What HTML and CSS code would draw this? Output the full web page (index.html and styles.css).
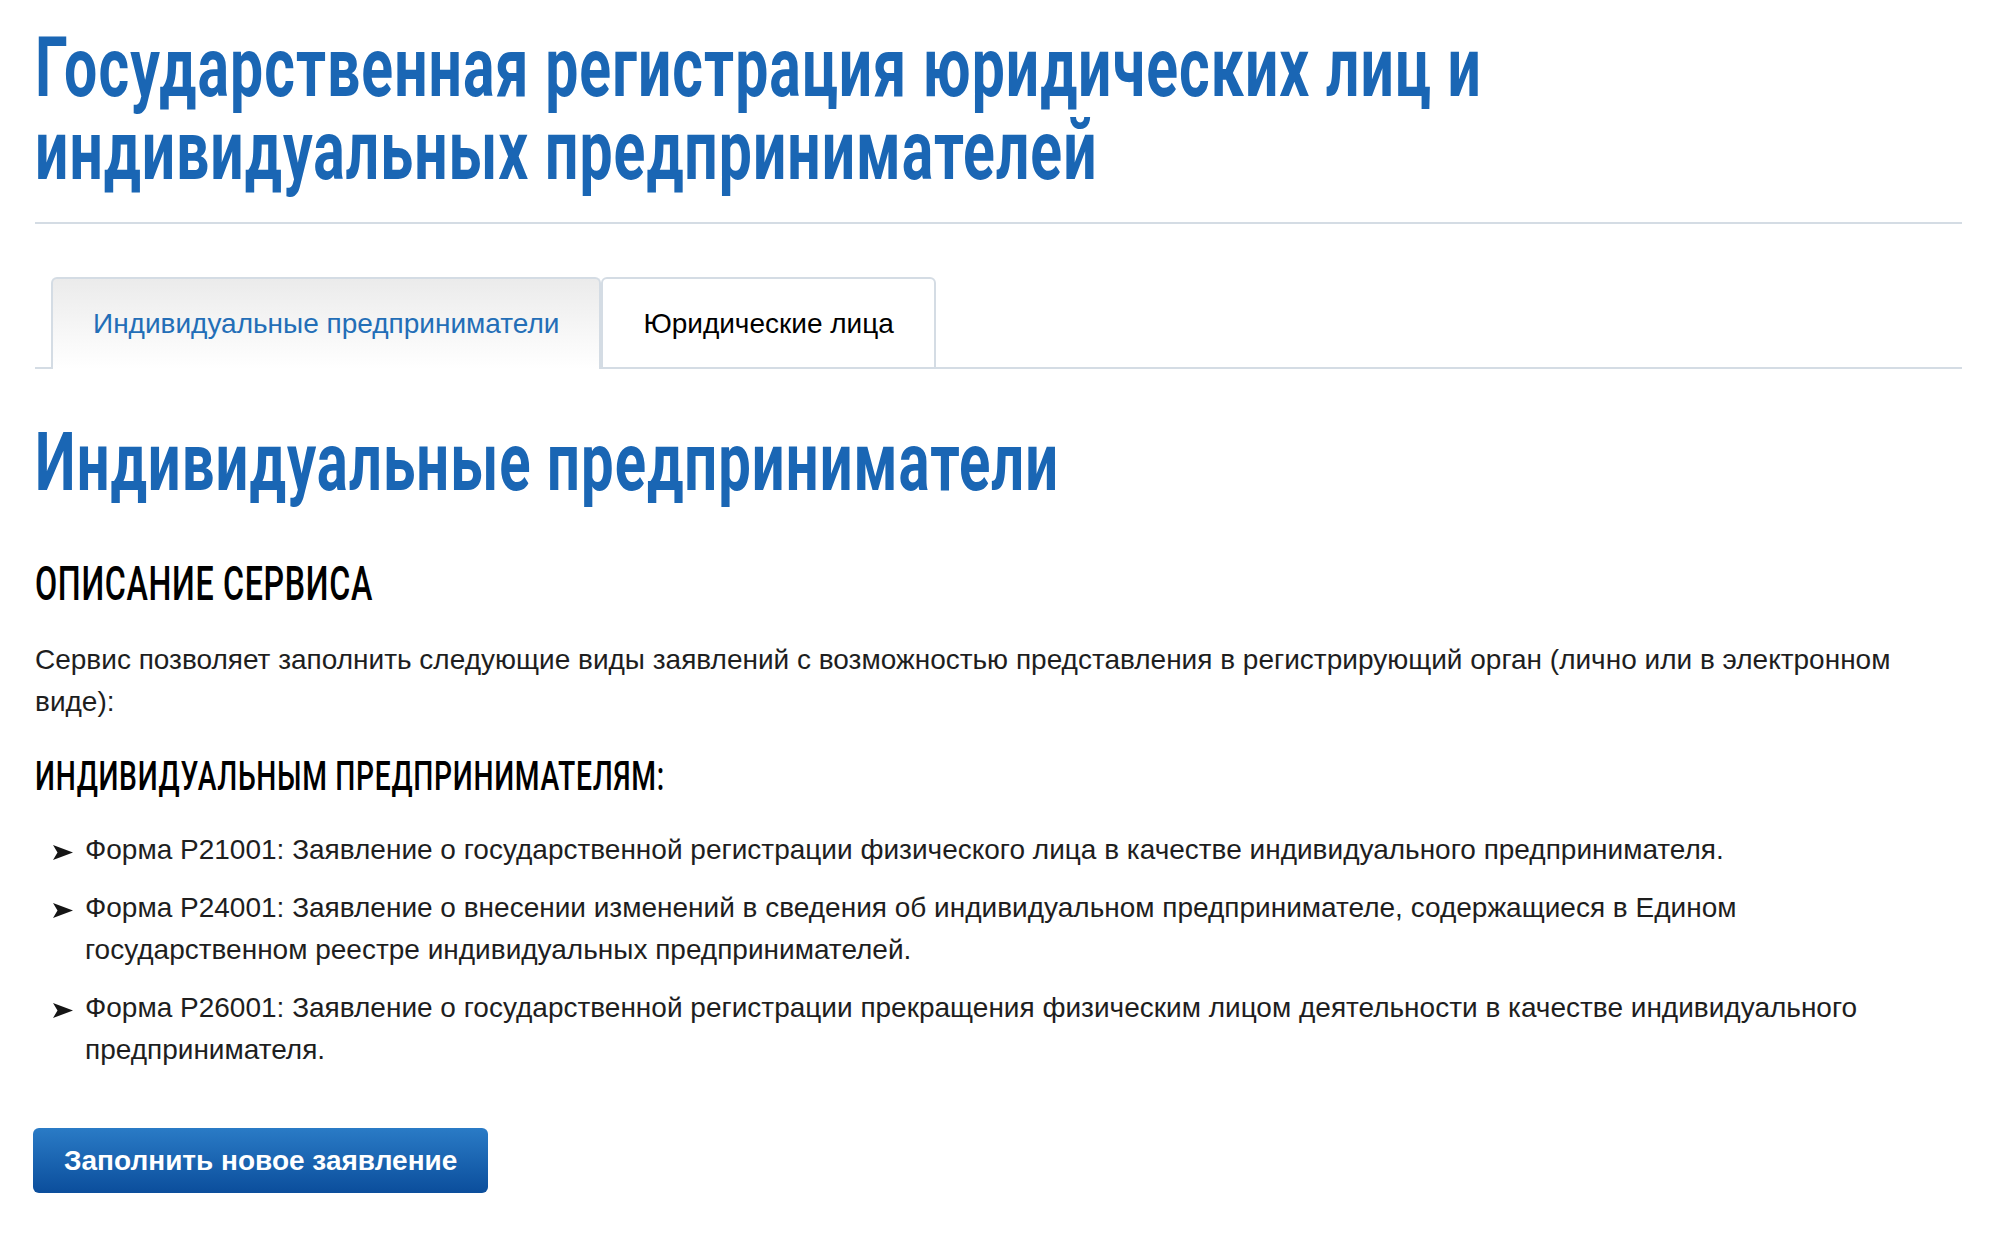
FILE: index.html
```html
<!DOCTYPE html>
<html lang="ru">
<head>
<meta charset="utf-8">
<title>Государственная регистрация юридических лиц и индивидуальных предпринимателей</title>
<link rel="stylesheet" href="styles.css">
</head>
<body>
<div class="page">
  <header class="page-head">
    <h1 class="page-title">Государственная регистрация юридических лиц и<br>индивидуальных предпринимателей</h1>
  </header>
  <nav class="tabs">
    <a class="tab tab-active" href="#">Индивидуальные предприниматели</a>
    <a class="tab" href="#">Юридические лица</a>
  </nav>
  <section class="content">
    <h2 class="section-title">Индивидуальные предприниматели</h2>
    <h3 class="sub-title">Описание сервиса</h3>
    <p class="text">Сервис позволяет заполнить следующие виды заявлений с возможностью представления в регистрирующий орган (лично или в электронном виде):</p>
    <h3 class="sub-title sub-title-sm">Индивидуальным предпринимателям:</h3>
    <ul class="forms">
      <li class="form-item">
        <svg class="arrow" viewBox="0 0 20 15"><polygon points="0,0 20,7.5 0,15 4.5,7.5"/></svg>
        <span>Форма Р21001: Заявление о государственной регистрации физического лица в качестве индивидуального предпринимателя.</span>
      </li>
      <li class="form-item">
        <svg class="arrow" viewBox="0 0 20 15"><polygon points="0,0 20,7.5 0,15 4.5,7.5"/></svg>
        <span>Форма Р24001: Заявление о внесении изменений в сведения об индивидуальном предпринимателе, содержащиеся в Едином государственном реестре индивидуальных предпринимателей.</span>
      </li>
      <li class="form-item">
        <svg class="arrow" viewBox="0 0 20 15"><polygon points="0,0 20,7.5 0,15 4.5,7.5"/></svg>
        <span>Форма Р26001: Заявление о государственной регистрации прекращения физическим лицом деятельности в качестве индивидуального предпринимателя.</span>
      </li>
    </ul>
    <div class="actions">
      <a class="btn" href="#">Заполнить новое заявление</a>
    </div>
  </section>
</div>
</body>
</html>
```

FILE: styles.css
```css
html, body {
  margin: 0;
  padding: 0;
  background: #ffffff;
  overflow-x: hidden;
}

body {
  font-family: "Liberation Sans", Arial, sans-serif;
  color: #1e1e1e;
}

.page {
  padding: 26px 38px 40px 35px;
}

.page-head {
  border-bottom: 2px solid #d4dce4;
  padding-bottom: 30px;
}

/* Condensed display headings */
.page-title,
.section-title,
.sub-title {
  margin: 0;
  font-family: Roboto, "Noto Sans", sans-serif;
  white-space: nowrap;
  transform-origin: 0 0;
}

.page-title {
  font-size: 84px;
  line-height: 83px;
  font-weight: 700;
  letter-spacing: 1.5px;
  color: #1a66b4;
  transform: scaleX(0.701);
}

/* Tabs */
.tabs {
  display: flex;
  margin-top: 53px;
  padding-left: 16px;
  border-bottom: 2px solid #d4dce4;
}

.tab {
  display: block;
  margin-bottom: -2px;
  padding: 25px 40px 23px;
  border: 2px solid #d4dce4;
  border-radius: 6px 6px 0 0;
  background: #ffffff;
  font-size: 28px;
  line-height: 40px;
  color: #000000;
  text-decoration: none;
}

.tab-active {
  border-bottom: 0;
  padding-bottom: 25px;
  background: linear-gradient(#ebebeb, #ffffff);
  color: #236eb7;
}

/* Content */
.section-title {
  margin-top: 48px;
  font-size: 82px;
  line-height: 90px;
  font-weight: 700;
  letter-spacing: 1.5px;
  color: #1a66b4;
  transform: scaleX(0.707);
}

.sub-title {
  margin-top: 49px;
  font-size: 48px;
  line-height: 56px;
  font-weight: 500;
  letter-spacing: 1px;
  color: #000000;
  text-transform: uppercase;
  transform: scaleX(0.671);
}

.sub-title-sm {
  margin-top: 29px;
  font-size: 41px;
  line-height: 48px;
  transform: scaleX(0.689);
}

.text {
  margin: 27px 0 0;
  font-size: 28px;
  line-height: 42px;
}

.forms {
  list-style: none;
  margin: 29px 0 0;
  padding: 0 0 0 18px;
  font-size: 28px;
  line-height: 42px;
}

.form-item {
  display: flex;
  gap: 12px;
}

.form-item + .form-item {
  margin-top: 16px;
}

.arrow {
  flex: none;
  width: 20px;
  height: 15px;
  margin-top: 16px;
  fill: #151515;
}

.actions {
  display: flex;
  margin-top: 57px;
}

.btn {
  display: block;
  height: 65px;
  margin-left: -2px;
  padding: 0 31px;
  border-radius: 6px;
  background: linear-gradient(#2a7bc6, #0b4e9c);
  font-size: 28px;
  line-height: 65px;
  font-weight: 700;
  color: #ffffff;
  text-decoration: none;
}
```
